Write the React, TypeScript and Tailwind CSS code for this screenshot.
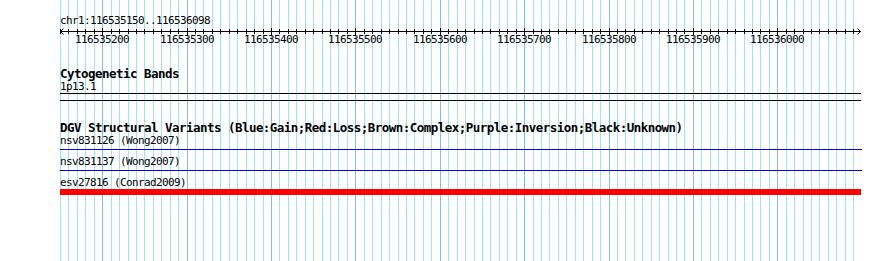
const START = 116535150;
const END = 116536098;
const X0 = 60;
const SPAN = 800;

const px = (bp: number) => X0 + ((bp - START) * SPAN) / (END - START);
const snap = (x: number) => Math.round(x) + 0.5;

const minor: number[] = [];
for (let bp = START; bp <= END; bp += 10) minor.push(bp);
const major = minor.filter((bp) => bp % 100 === 0);

function Grid() {
  return (
    <svg className="pointer-events-none absolute inset-0" width={890} height={261} shapeRendering="crispEdges">
      {minor.map((bp) => (
        <line
          key={bp}
          x1={snap(px(bp))}
          x2={snap(px(bp))}
          y1={0}
          y2={261}
          stroke={bp % 100 === 0 ? "#80c2ee" : "#a0e4ee"}
          strokeWidth={1}
        />
      ))}
    </svg>
  );
}

function Ruler() {
  return (
    <div className="relative h-[20px] w-[890px]">
      <svg className="absolute left-0 top-0" width={890} height={8} shapeRendering="crispEdges">
        <line x1={60} x2={861} y1={4.5} y2={4.5} stroke="#000" />
        <path d="M60.5 4.5 L63.5 1.5 M60.5 4.5 L63.5 7.5" stroke="#000" fill="none" shapeRendering="auto" />
        <path d="M860.5 4.5 L857.5 1.5 M860.5 4.5 L857.5 7.5" stroke="#000" fill="none" shapeRendering="auto" />
        {minor.map((bp) => (
          <line
            key={bp}
            x1={snap(px(bp))}
            x2={snap(px(bp))}
            y1={bp % 100 === 0 ? 1 : 2}
            y2={bp % 100 === 0 ? 8 : 7}
            stroke="#000"
          />
        ))}
      </svg>
      {major.map((bp) => (
        <span
          key={bp}
          className="absolute top-[6px] w-[54px] text-center text-[11px] leading-[13px] tracking-[-0.62px]"
          style={{ left: Math.round(px(bp)) - 27 }}
        >
          {bp}
        </span>
      ))}
    </div>
  );
}

export default function App() {
  return (
    <div className="relative h-[261px] w-[890px] overflow-hidden bg-white font-['DejaVu_Sans_Mono','Liberation_Mono',monospace] text-black">
      <Grid />
      <div className="relative flex flex-col">
        <div className="pl-[60px] pt-[14px] text-[11px] leading-[13px] tracking-[-0.62px]">chr1:116535150..116536098</div>
        <Ruler />

        <div className="mt-[20px] pl-[60px] text-[12.5px] font-bold leading-[13px] tracking-[-0.53px]">Cytogenetic Bands</div>
        <div className="pl-[60px] text-[11px] leading-[13px] tracking-[-0.62px]">1p13.1</div>
        <div className="ml-[60px] h-[8px] w-[801px] border-y border-black" />

        <div className="mt-[20px] pl-[60px] text-[12.5px] font-bold leading-[13px] tracking-[-0.53px]">
          DGV Structural Variants (Blue:Gain;Red:Loss;Brown:Complex;Purple:Inversion;Black:Unknown)
        </div>
        <div className="pl-[60px] text-[11px] leading-[13px] tracking-[-0.62px]">nsv831126 (Wong2007)</div>
        <div className="ml-[60px] mt-[2px] h-px w-[802px] bg-[#0000ff]" />
        <div className="mt-[5px] pl-[60px] text-[11px] leading-[13px] tracking-[-0.62px]">nsv831137 (Wong2007)</div>
        <div className="ml-[60px] mt-[2px] h-px w-[802px] bg-[#0000ff]" />
        <div className="mt-[5px] pl-[60px] text-[11px] leading-[13px] tracking-[-0.62px]">esv27816 (Conrad2009)</div>
        <div className="ml-[60px] h-[6px] w-[801px] bg-[#ff0000]" />
      </div>
    </div>
  );
}
